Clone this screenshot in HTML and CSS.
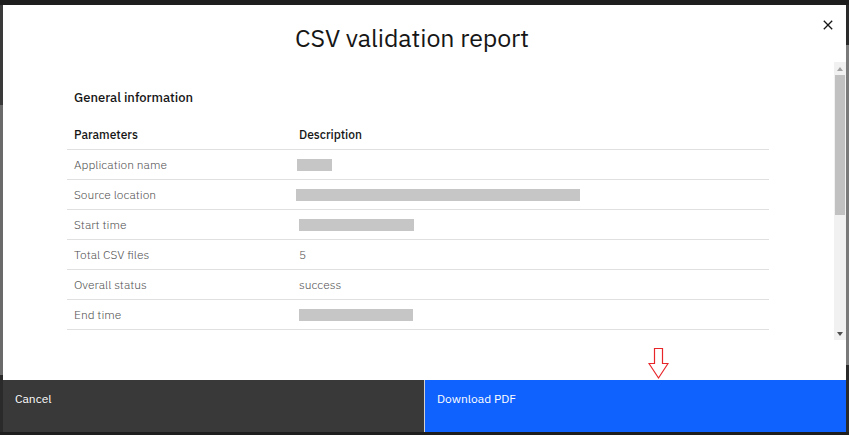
FILE: index.html
```html
<!DOCTYPE html>
<html lang="en">
<head>
<meta charset="utf-8">
<title>CSV validation report</title>
<link rel="stylesheet" href="styles.css">
</head>
<body>
<div class="backdrop">
  <div class="edge edge-left"></div>
  <div class="modal">
    <header class="modal-header">
      <h1 class="modal-title">CSV validation report</h1>
      <button class="close-btn" aria-label="Close">
        <svg width="10" height="10" viewBox="0 0 10 10"><path d="M0.8 0.8 L9.2 9.2 M9.2 0.8 L0.8 9.2" stroke="#161616" stroke-width="1.3" fill="none"/></svg>
      </button>
    </header>
    <div class="modal-body">
      <div class="scroll-content">
        <h2 class="section-title">General information</h2>
        <div class="report-table">
          <div class="row head"><div class="cell">Parameters</div><div class="cell">Description</div></div>
          <div class="row"><div class="cell">Application name</div><div class="cell"><span class="redact" style="width:35px;margin-left:-2px"></span></div></div>
          <div class="row"><div class="cell">Source location</div><div class="cell"><span class="redact" style="width:284px;margin-left:-3px"></span></div></div>
          <div class="row"><div class="cell">Start time</div><div class="cell"><span class="redact" style="width:115px"></span></div></div>
          <div class="row"><div class="cell">Total CSV files</div><div class="cell">5</div></div>
          <div class="row"><div class="cell">Overall status</div><div class="cell">success</div></div>
          <div class="row"><div class="cell">End time</div><div class="cell"><span class="redact" style="width:114px"></span></div></div>
        </div>
      </div>
      <div class="scrollbar">
        <div class="sb-btn"><span class="tri-up"></span></div>
        <div class="sb-track"><div class="sb-thumb"></div></div>
        <div class="sb-btn"><span class="tri-down"></span></div>
      </div>
    </div>
    <div class="spacer">
      <svg class="annot-arrow" width="21" height="32" viewBox="0 0 21 32"><polygon points="6.5,0.5 14.5,0.5 14.5,15.5 20,15.5 10.5,30 1,15.5 6.5,15.5" fill="#fff" stroke="#e8262a" stroke-width="1.2"/></svg>
    </div>
    <footer class="modal-footer">
      <button class="btn btn-secondary">Cancel</button>
      <button class="btn btn-primary">Download PDF</button>
    </footer>
  </div>
  <div class="edge edge-right"></div>
</div>
</body>
</html>
```

FILE: styles.css
```css
* { box-sizing: border-box; }
html, body { margin: 0; padding: 0; }
body {
  width: 849px;
  height: 435px;
  background: #1e1e1e;
  font-family: "IBM Plex Sans", "Noto Sans", "Open Sans", sans-serif;
  overflow: hidden;
}
.backdrop {
  display: flex;
  height: 435px;
  padding: 5px 0 3px 0;
}
.edge { width: 3px; }
.edge-left { background: linear-gradient(#3a3a3a 0, #3a3a3a 100px, #6a6a6a 100px, #6a6a6a 370px, #2a2a2a 370px); }
.edge-right { background: linear-gradient(#2a2a2a 0, #2a2a2a 40px, #7a7a7a 40px, #7a7a7a 360px, #2a2a2a 360px); }
.modal {
  width: 843px;
  background: #fff;
  display: flex;
  flex-direction: column;
}
.modal-header {
  height: 57px;
  display: flex;
  justify-content: center;
  align-items: flex-start;
  position: relative;
}
.modal-title {
  margin: 18px 25px 0 0;
  font-size: 25px;
  line-height: 30px;
  font-weight: 400;
  color: #161616;
  letter-spacing: -0.1px;
}
.close-btn {
  position: absolute;
  right: 13px;
  top: 15px;
  width: 10px;
  height: 10px;
  padding: 0;
  border: 0;
  background: none;
  display: flex;
}
.modal-body {
  height: 278px;
  display: flex;
}
.scroll-content {
  flex: 1;
  padding: 27px 66px 0 64px;
  overflow: hidden;
}
.section-title {
  margin: 0 0 13px 7px;
  font-size: 13px;
  line-height: 18px;
  font-weight: 500;
  color: #161616;
}
.report-table { width: 702px; }
.row {
  display: grid;
  grid-template-columns: 225px 1fr;
  height: 30px;
  border-bottom: 1px solid #e0e0e0;
  align-items: center;
}
.cell {
  padding-left: 7px;
  font-size: 12px;
  line-height: 16px;
  font-weight: 300;
  color: #525252;
  display: flex;
  align-items: center;
}
.row.head .cell { color: #161616; font-weight: 500; }
.redact {
  display: inline-block;
  height: 12px;
  background: #c6c6c6;
}
.scrollbar {
  width: 12px;
  background: #f1f1f1;
  display: flex;
  flex-direction: column;
}
.sb-btn {
  height: 13px;
  display: flex;
  align-items: center;
  justify-content: center;
}
.tri-up {
  width: 0; height: 0;
  border-left: 3.5px solid transparent;
  border-right: 3.5px solid transparent;
  border-bottom: 4px solid #a3a3a3;
}
.tri-down {
  width: 0; height: 0;
  border-left: 3.5px solid transparent;
  border-right: 3.5px solid transparent;
  border-top: 4px solid #505050;
}
.sb-track { flex: 1; padding: 0 1px; }
.sb-thumb { height: 140px; background: #c1c1c1; }
.spacer {
  height: 40px;
  position: relative;
}
.annot-arrow {
  position: absolute;
  left: 645px;
  top: 8px;
}
.modal-footer {
  height: 52px;
  display: grid;
  grid-template-columns: 1fr 1fr;
  gap: 1px;
  background: #d0d0d0;
}
.btn {
  border: 0;
  margin: 0;
  text-align: left;
  font-family: inherit;
  font-size: 12px;
  line-height: 16px;
  font-weight: 400;
  color: #fff;
  padding: 11px 12px;
  display: flex;
  align-items: flex-start;
}
.btn-secondary { background: #393939; }
.btn-primary { background: #0f62fe; }
```
